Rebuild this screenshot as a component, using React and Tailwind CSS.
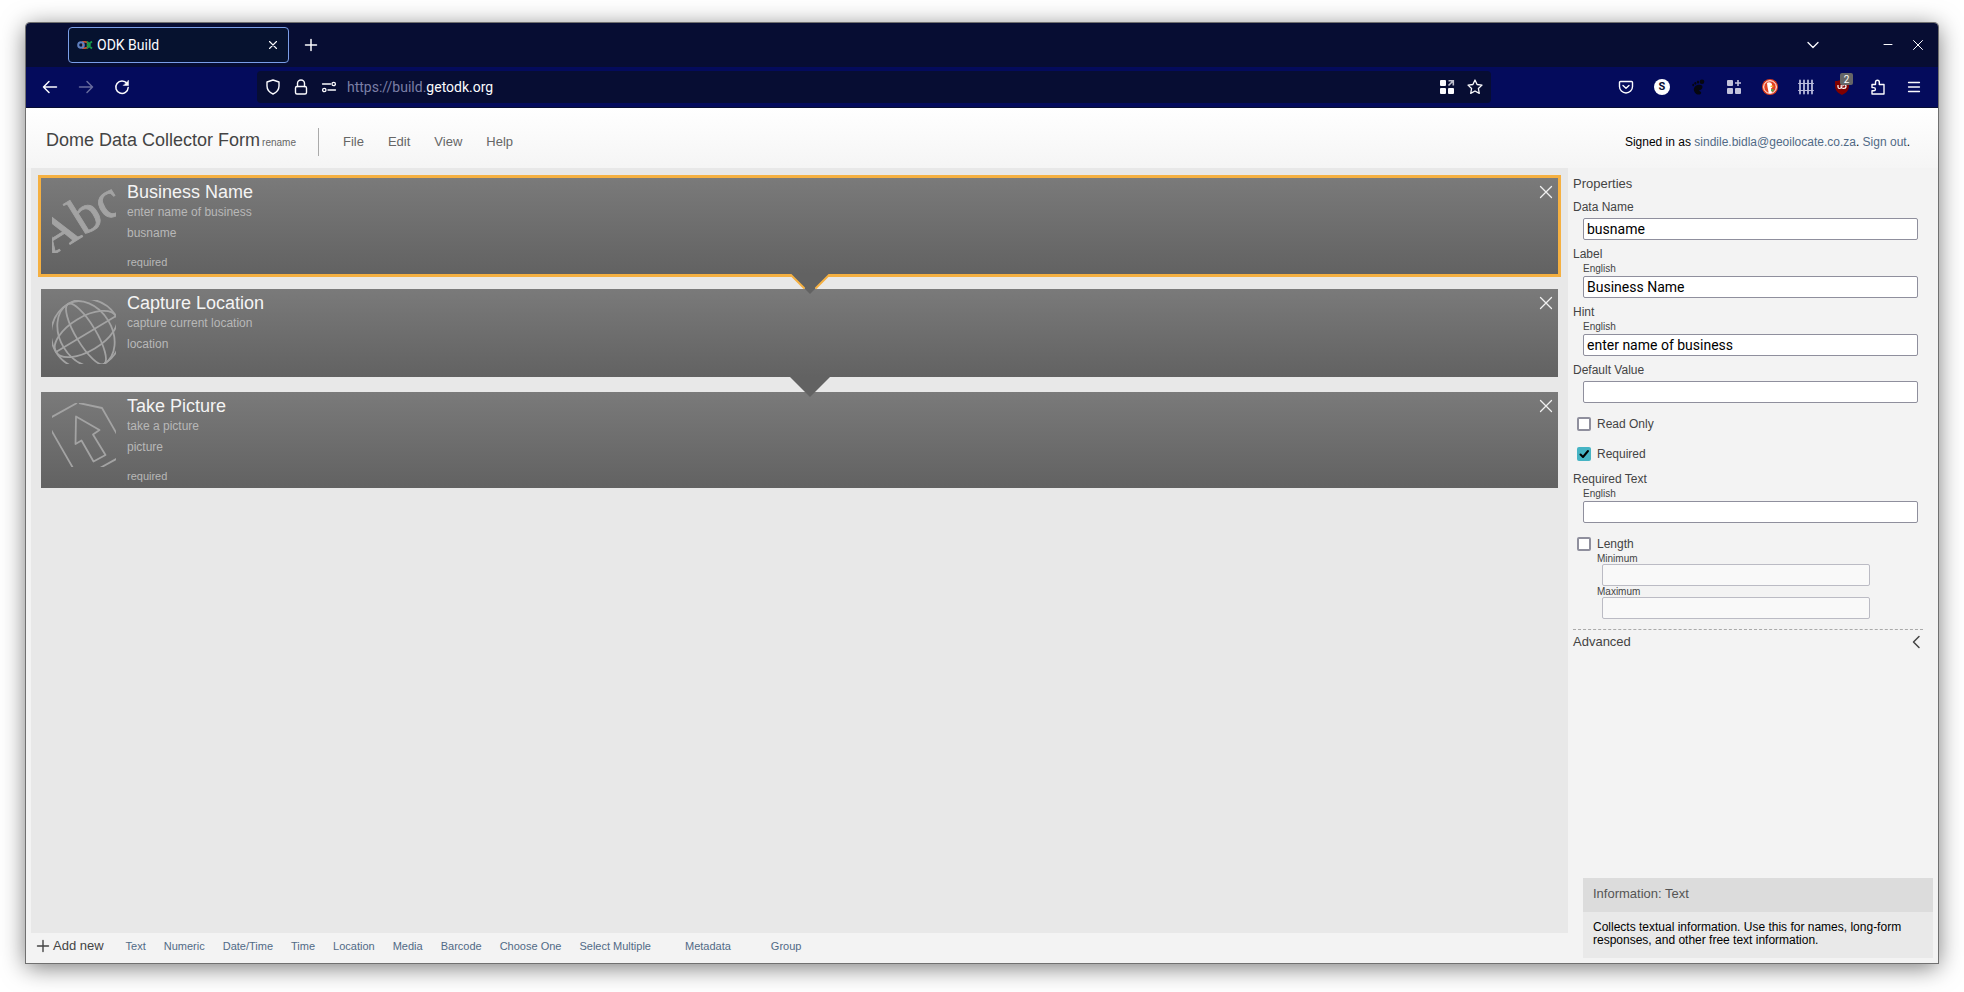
import React from "react";

const tools = ["Text", "Numeric", "Date/Time", "Time", "Location", "Media", "Barcode", "Choose One", "Select Multiple"];

function Stroke({ children, className = "size-4", w = 1.5 }) {
  return (
    <svg viewBox="0 0 16 16" className={className} fill="none" stroke="currentColor" strokeWidth={w} strokeLinecap="round" strokeLinejoin="round" aria-hidden="true">
      {children}
    </svg>
  );
}

function IconButton({ label, children, className = "" }) {
  return (
    <button type="button" aria-label={label} className={`flex size-4 shrink-0 items-center justify-center ${className}`}>
      {children}
    </button>
  );
}

function TabBar() {
  return (
    <div className="flex h-11 items-center rounded-t bg-[#070d33] pr-3 pl-[42px] text-[#fbfbfe]">
      <div className="flex h-9 w-[221px] items-center rounded-sm border border-[#7a9ee8] bg-[#06122f] pr-[7px] pl-2">
        <svg viewBox="0 0 16 16" className="size-4" fill="none" aria-hidden="true">
          <path d="M6 4.8h2a3.2 3.2 0 0 1 0 6.4H6z" stroke="#c4532d" strokeWidth="1.8" />
          <circle cx="4" cy="8" r="2.8" stroke="#5f80c0" strokeWidth="2" />
          <path d="M15 4.5 10.5 8 15 11.500M10 4.500l3 3.500-3 3.500" stroke="#149a4a" strokeWidth="1.800" />
        </svg>
        <span className="ml-1 grow font-[Roboto,sans-serif] text-sm">ODK Build</span>
        <IconButton label="Close tab"><Stroke w={1.1}><path d="M4.500 4.500l7 7M11.500 4.500l-7 7" /></Stroke></IconButton>
      </div>
      <IconButton label="New tab" className="ml-[14px]"><Stroke><path d="M8 2.500v11M2.500 8h11" /></Stroke></IconButton>
      <div className="grow" />
      <IconButton label="List all tabs"><Stroke w={1.3}><path d="M3 5.500 8 10.500l5-5" /></Stroke></IconButton>
      <IconButton label="Minimize" className="ml-[59px]"><Stroke w={1}><path d="M4 7.500h8" /></Stroke></IconButton>
      <IconButton label="Close window" className="ml-[14px]"><Stroke w={1}><path d="M3.500 3.500l9 9M12.500 3.500l-9 9" /></Stroke></IconButton>
    </div>
  );
}

function NavBar() {
  return (
    <div className="flex h-[41px] items-center border-b border-[#070d33] bg-[#040b5c] px-4 text-[#fbfbfe]">
      <div className="flex gap-5">
        <IconButton label="Back"><Stroke><path d="M14.5 8h-13M7 2.5 1.5 8 7 13.5" /></Stroke></IconButton>
        <IconButton label="Forward" className="opacity-40"><Stroke><path d="M1.5 8h13M9 2.5 14.5 8 9 13.5" /></Stroke></IconButton>
        <IconButton label="Reload"><Stroke><path d="M13 4.5A6.2 6.2 0 1 0 14.200 8.500" /><path d="M14.500 1.500v5H9.500z" fill="currentColor" strokeWidth="0.5" /></Stroke></IconButton>
      </div>
      <div className="ml-[127px] flex h-8 max-w-[1234px] grow items-center rounded bg-[#070d33] px-2">
        <IconButton label="Tracking protection"><Stroke w={1.4}><path d="M8 1 2 3v4c0 3.500 2.500 6.500 6 8 3.500-1.500 6-4.500 6-8V3z" /></Stroke></IconButton>
        <IconButton label="Connection secure" className="ml-3"><Stroke w={1.4}><rect x="2.5" y="7.500" width="11" height="7.500" rx="1.500" /><path d="M4.500 7.500V4.500a3.500 3.500 0 0 1 7 0v3" /></Stroke></IconButton>
        <IconButton label="Permissions" className="ml-3"><Stroke w={1.300}><path d="M1.500 5h8M7 11h7.500" /><circle cx="12.700" cy="5" r="1.700" /><circle cx="3.300" cy="11" r="1.700" /></Stroke></IconButton>
        <p className="ml-[10px] grow font-[Roboto,sans-serif] text-sm text-[#7b7fa6]">https://build.<span className="text-[#fbfbfe]">getodk.org</span></p>
        <IconButton label="Open app">
          <svg viewBox="0 0 16 16" className="size-4" fill="currentColor" aria-hidden="true">
            <rect x="1" y="1" width="6" height="6" rx="1" /><rect x="1" y="9" width="6" height="6" rx="1" /><rect x="9" y="9" width="6" height="6" rx="1" />
            <path d="M9.5 1.8h4.800v4.700M14 2l-4.500 4.500" fill="none" stroke="#bfc0cd" strokeWidth="1.6" />
          </svg>
        </IconButton>
        <IconButton label="Bookmark" className="ml-3"><Stroke w={1.3}><path d="m8 1 2.100 4.500 4.900.6-3.600 3.400.9 4.900L8 12l-4.300 2.400.9-4.900L1 6.100l4.900-.6z" /></Stroke></IconButton>
      </div>
      <div className="ml-auto flex gap-5">
        <IconButton label="Pocket"><Stroke w={1.4}><path d="M2.500 2.500h11a1 1 0 0 1 1 1V7.500a6.500 6.500 0 0 1-13 0V3.500a1 1 0 0 1 1-1z" /><path d="M5 6.500l3 2.800 3-2.800" /></Stroke></IconButton>
        <IconButton label="Account"><span className="flex size-4 items-center justify-center rounded-full bg-white font-[Roboto,sans-serif] text-[11px] font-bold text-[#070d33]">S</span></IconButton>
        <IconButton label="GNOME extensions">
          <svg viewBox="0 0 16 16" className="size-4" fill="#05060f" aria-hidden="true">
            <ellipse cx="12" cy="2.700" rx="2.300" ry="2.300" /><ellipse cx="8" cy="3" rx="1.100" ry="1.600" /><ellipse cx="5.300" cy="4.300" rx="1" ry="1.400" /><ellipse cx="3.200" cy="6" rx=".9" ry="1.200" />
            <path d="M12.500 8c0-2-2.500-2.800-5-2C4 7 3 10 4.500 13c1.200 2.500 5 3.500 6.300 1.700 1.200-1.700-.8-2.500-2.300-3C10 11.500 12.500 10 12.500 8z" />
          </svg>
        </IconButton>
        <IconButton label="Add widget">
          <svg viewBox="0 0 16 16" className="size-4" fill="#c3c4dc" aria-hidden="true">
            <rect x="1" y="1" width="6" height="6" rx="1" /><rect x="1" y="9" width="6" height="6" rx="1" /><rect x="9" y="9" width="6" height="6" rx="1" />
            <path d="M11.200 1h1.600v2.200H15v1.600h-2.200V7h-1.600V4.800H9V3.200h2.200z" />
          </svg>
        </IconButton>
        <IconButton label="DuckDuckGo">
          <svg viewBox="0 0 16 16" className="size-4" aria-hidden="true">
            <circle cx="8" cy="8" r="8" fill="#e2401f" /><circle cx="8" cy="8" r="6.300" fill="none" stroke="#fff" strokeWidth="1" />
            <path d="M5 4c1.500-1.500 4.500-1 5 1.500l.3 3L9 9.500l1 4.300c-1.500.4-2.600.2-3.300 0L5.500 8z" fill="#fff" />
            <path d="M8.500 6.800c1.500-.4 3-.2 3.500.3-.8.700-2 1-3.500 1z" fill="#f8b81f" /><path d="M9 10.500l2.500-.8v3L9 12z" fill="#4caf50" />
          </svg>
        </IconButton>
        <IconButton label="Fence"><Stroke w={1.8} className="size-4 text-[#b9bbdc]"><path d="M2 1.500v13M6 1.500v13M10 1.500v13M14 1.500v13" /><path d="M.6 4.500h14.800M.6 11.500h14.800" strokeWidth="1.200" /></Stroke></IconButton>
        <IconButton label="uBlock, 2 blocked" className="relative">
          <svg viewBox="0 0 16 16" className="size-4" aria-hidden="true">
            <path d="M8 0c2 1.500 4 2 7 2v5c0 4.500-3.500 7.500-7 9-3.500-1.500-7-4.500-7-9V2c3 0 5-.5 7-2z" fill="#800000" />
            <path d="M4 6v2c0 2 3.200 2 3.200 0V6M7.200 8c0 1.800 4.800 2.200 4.800-.5S8.800 5 8.600 7.500" fill="none" stroke="#fff" strokeWidth="1.200" />
          </svg>
          <span className="absolute -top-1.5 left-1.5 flex h-3 w-[13px] items-center justify-center rounded-xs bg-[#666] font-[Roboto,sans-serif] text-[10px] text-white">2</span>
        </IconButton>
        <IconButton label="Extensions"><Stroke w={1.4}><path d="M2 5.500h3.500V3.200a1.900 1.900 0 0 1 3.800 0v2.300H14V15H2v-3.200h1.800a1.600 1.600 0 0 0 0-3.200H2z" /></Stroke></IconButton>
        <IconButton label="Menu"><Stroke w={1.3}><path d="M2.500 3.500h11M2.500 8h11M2.500 12.500h11" /></Stroke></IconButton>
      </div>
    </div>
  );
}

function FormHeader() {
  return (
    <header className="flex h-[60px] items-center bg-linear-to-b from-white to-[#f5f5f5] pt-2 pr-7 pl-5 text-[#666]">
      <h1 className="-mt-1 text-lg leading-6 text-[#444]">Dome Data Collector Form</h1>
      <button type="button" className="ml-0.5 text-[10px]">rename</button>
      <nav className="ml-[22px] flex h-7 items-center gap-6 border-l border-[#aaa] pl-6 text-[13px]">
        <a href="#file">File</a>
        <a href="#edit">Edit</a>
        <a href="#view">View</a>
        <a href="#help">Help</a>
      </nav>
      <p className="ml-auto text-xs text-black">
        Signed in as <a href="#account" className="text-[#516a86]">sindile.bidla@geoilocate.co.za</a>. <a href="#signout" className="text-[#516a86]">Sign out</a>.
      </p>
    </header>
  );
}

function TextArt() {
  return (
    <svg viewBox="0 0 64 64" className="size-16" aria-hidden="true">
      <text transform="translate(-2 68) rotate(-32)" fill="#a3a3a3" stroke="#a3a3a3" strokeWidth="0.8" fontFamily="Liberation Serif, serif" fontSize="54">Abc</text>
    </svg>
  );
}

function GlobeArt() {
  return (
    <svg viewBox="0 0 64 64" className="size-16" fill="none" stroke="#a3a3a3" strokeWidth="1.800" aria-hidden="true">
      <g transform="translate(34 34) rotate(-31)">
        <circle r="35" />
        <ellipse rx="26" ry="35" />
        <ellipse rx="10" ry="35" />
        <ellipse rx="35" ry="17" />
        <path d="M-35 0H35" />
      </g>
    </svg>
  );
}

function MediaArt() {
  return (
    <svg viewBox="0 0 64 64" className="size-16" fill="none" stroke="#a3a3a3" strokeWidth="1.800" strokeLinejoin="round" aria-hidden="true">
      <path d="M-2 15 25 0M27 0l23 5 16 28M-2 25l23 40M48 65l18-10" />
      <path d="M24 13.500 47.500 27l-6.500 4.500 12.500 20.500-12 6.500L29.500 37.500 23.500 41z" />
    </svg>
  );
}

function FieldCard({ art, title, hint, name, required, selected, arrow }) {
  return (
    <article className={`relative flex items-start bg-linear-to-b from-[#7a7a7a] to-[#626262] pl-[11px] ${required ? "h-24" : "h-[88px]"} ${selected ? "outline-3 outline-[#f5b041]" : ""}`}>
      <div className="mt-[11px] shrink-0">{art}</div>
      <div className="ml-[11px] flex h-full grow flex-col text-[#b8b8b8]">
        <h2 className="pt-1 text-lg leading-5 text-[#f4f4f4]">{title}</h2>
        <p className="text-xs leading-[21px]">{hint}</p>
        <p className="text-xs leading-[21px]">{name}</p>
        {required && <p className="mt-[10px] text-[11px] leading-4">required</p>}
      </div>
      <button type="button" aria-label={`Delete ${title}`} className="mt-[6px] mr-1 text-[#f0f0f0]">
        <Stroke w={1.3}><path d="M2.500 2.500l11 11M13.500 2.500l-11 11" /></Stroke>
      </button>
      {arrow && (
        <svg viewBox="0 0 48 24" className="absolute top-full left-1/2 z-10 -ml-3.5 h-6 w-12" aria-hidden="true">
          <path d="M4 0h40L24 20z" fill="#626262" />
          {selected && <path d="M4 0 18.500 14.500M44 0 29.500 14.500" stroke="#f5b041" strokeWidth="2" />}
        </svg>
      )}
    </article>
  );
}

function TextField({ id, label, language, value = "" }) {
  return (
    <div className="mb-1.5 pr-[5px]">
      <label htmlFor={id} className={`block text-xs leading-4 ${language ? "" : "mb-[3px]"}`}>
        {label}
        {language && <span className="ml-[10px] block text-[10px] leading-[14px]">{language}</span>}
      </label>
      <input id={id} type="text" defaultValue={value} className="ml-[10px] block h-[22px] w-[calc(100%-10px)] rounded-xs border border-[#8f8f9d] bg-white px-[3px] font-[Roboto,sans-serif] text-sm text-black" />
    </div>
  );
}

function CheckField({ id, label, checked }) {
  return (
    <div className="flex h-[30px] items-center pl-1">
      <span className="relative flex size-[14px]">
        <input id={id} type="checkbox" defaultChecked={checked} className="peer size-[14px] appearance-none rounded-xs border-2 border-[#8f8f9d] bg-white checked:border-0 checked:bg-[#46b4c4]" />
        <svg viewBox="0 0 14 14" className="pointer-events-none absolute inset-0 hidden size-[14px] peer-checked:block" fill="none" stroke="#000" strokeWidth="2" strokeLinecap="round" strokeLinejoin="round" aria-hidden="true">
          <path d="M3.500 7.500 6 10l5-6" />
        </svg>
      </span>
      <label htmlFor={id} className="ml-[6px] text-xs">{label}</label>
    </div>
  );
}

function RangeField({ id, label }) {
  return (
    <div className="pl-6">
      <label htmlFor={id} className="block text-[10px] leading-[11px]">{label}</label>
      <input id={id} type="text" disabled className="ml-[5px] block h-[22px] w-[268px] rounded-xs border border-[#bbbbc4] bg-[#f9f9f9] px-1" />
    </div>
  );
}

function Properties() {
  return (
    <aside className="flex w-[370px] shrink-0 flex-col pl-[5px] text-[#444]">
      <div className="pr-[15px]">
        <h2 className="mt-2 mb-[7px] text-[13px] leading-4">Properties</h2>
        <TextField id="data-name" label="Data Name" value="busname" />
        <TextField id="label" label="Label" language="English" value="Business Name" />
        <TextField id="hint" label="Hint" language="English" value="enter name of business" />
        <TextField id="default" label="Default Value" />
        <CheckField id="read-only" label="Read Only" />
        <CheckField id="required" label="Required" checked />
        <div className="mt-[2px]"><TextField id="required-text" label="Required Text" language="English" /></div>
        <CheckField id="length" label="Length" />
        <div className="-mt-1.5"><RangeField id="minimum" label="Minimum" /><RangeField id="maximum" label="Maximum" /></div>
        <button type="button" className="mt-[10px] flex w-full items-center justify-between border-t border-dashed border-[#aaa] pt-0.5 text-[13px] leading-5">
          Advanced
          <Stroke w={1.5}><path d="M12 2.500 6.500 8l5.500 5.500" /></Stroke>
        </button>
      </div>
      <section className="mt-auto mr-[5px] mb-[5px] ml-[10px] bg-[#e9e9e9]">
        <h2 className="bg-[#dcdcdc] px-[10px] pt-[7px] pb-[9px] text-[13px] leading-[18px] text-[#555]">Information: Text</h2>
        <p className="px-[10px] pt-[9px] pb-[11px] text-xs leading-[13px] text-black">Collects textual information. Use this for names, long-form responses, and other free text information.</p>
      </section>
    </aside>
  );
}

function AddBar() {
  return (
    <footer className="flex h-[30px] items-center pb-1 pl-1 text-[11px] text-[#516a86]">
      <span className="flex items-center gap-0.5 text-[13px] text-[#444]">
        <Stroke w={1.4}><path d="M8 2.500v11M2.500 8h11" /></Stroke>
        Add new
      </span>
      <div className="ml-[22px] flex gap-[18px]">
        {tools.map((t) => <button key={t} type="button">{t}</button>)}
      </div>
      <button type="button" className="ml-[34px]">Metadata</button>
      <button type="button" className="ml-10">Group</button>
    </footer>
  );
}

export default function App() {
  return (
    <div className="flex min-h-screen bg-white px-[26px] pt-[23px] pb-[29px] font-['Liberation_Sans',Arial,sans-serif]">
      <div className="flex grow flex-col rounded-t bg-[#f3f3f3] shadow-[0_0_0_1px_#707070,0_4px_24px_rgba(0,0,0,0.55)]">
        <TabBar />
        <NavBar />
        <FormHeader />
        <main className="flex grow">
          <div className="flex grow flex-col pl-[5px]">
            <section className="flex grow flex-col gap-[15px] bg-[#e8e8e8] p-[10px]">
              <FieldCard art={<TextArt />} title="Business Name" hint="enter name of business" name="busname" required selected arrow />
              <FieldCard art={<GlobeArt />} title="Capture Location" hint="capture current location" name="location" arrow />
              <FieldCard art={<MediaArt />} title="Take Picture" hint="take a picture" name="picture" required />
            </section>
            <AddBar />
          </div>
          <Properties />
        </main>
      </div>
    </div>
  );
}
